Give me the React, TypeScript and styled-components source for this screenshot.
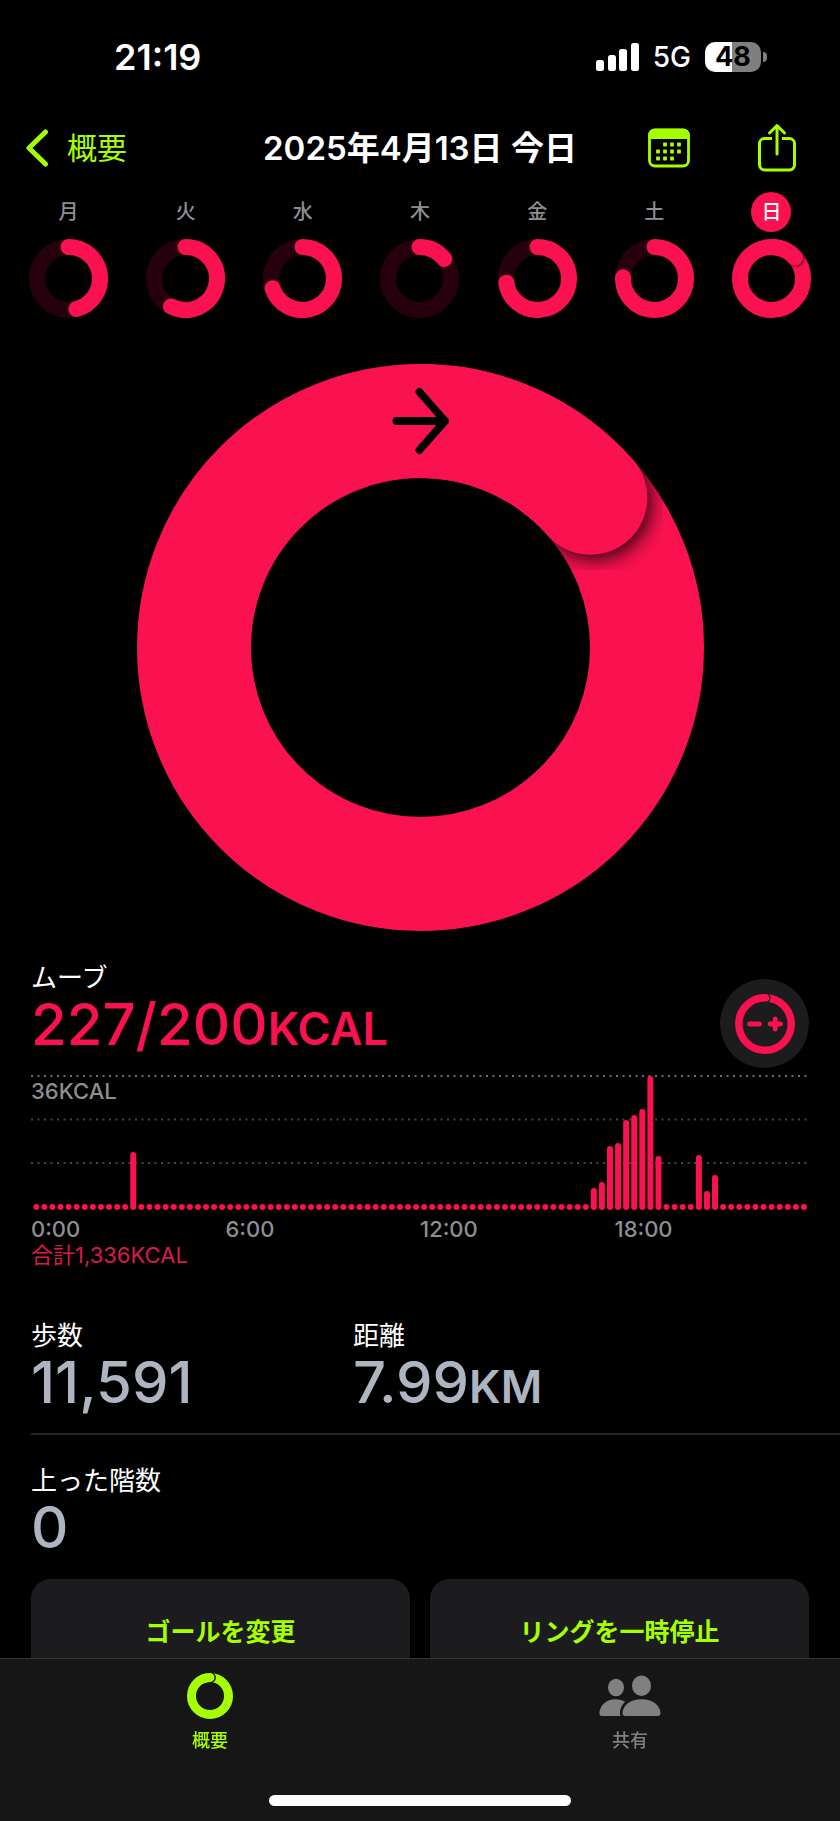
import React from 'react';
import styled, { createGlobalStyle } from 'styled-components';

const MOVE = '#fa114f';
const LIME = '#a6ff00';
const GRAY = '#8e8e93';

const GlobalStyle = createGlobalStyle`
  *, *::before, *::after { box-sizing: border-box; }
  html, body { margin: 0; padding: 0; background: #000; }
  body {
    color: #fff;
    font-family: Inter, "Noto Sans CJK JP", sans-serif;
    -webkit-font-smoothing: antialiased;
  }
  button { font: inherit; color: inherit; background: none; border: 0; padding: 0; cursor: pointer; }
  a { color: inherit; text-decoration: none; }
  h1, h2, p, dl, dt, dd { margin: 0; font-weight: inherit; font-size: inherit; }
  svg { display: block; }
`;

const Page = styled.div`
  min-height: 100vh;
  padding-bottom: 130px;
`;

const StatusBar = styled.div`
  display: flex;
  justify-content: space-between;
  align-items: center;
  height: 114px;
  padding: 0 73px 0 114px;
`;

const Clock = styled.time`
  font-size: 36px;
  font-weight: 600;
  line-height: 40px;
`;

const StatusIcons = styled.div`
  display: flex;
  align-items: center;
  gap: 14px;
`;

const Network = styled.span`
  font-size: 28px;
  font-weight: 500;
  line-height: 32px;
`;

const Battery = styled.div`
  display: flex;
  align-items: center;
  gap: 2px;
`;

const BatteryBody = styled.div<{ $level: number }>`
  width: 56px;
  height: 30px;
  border-radius: 10px;
  background: linear-gradient(to right, #fff ${p => p.$level}%, #7f7f7f ${p => p.$level}%);
  color: #000;
  font-size: 27px;
  font-weight: 700;
  line-height: 30px;
  text-align: center;
`;

const BatteryTip = styled.div`
  width: 4px;
  height: 10px;
  border-radius: 0 5px 5px 0;
  background: #7f7f7f;
`;

const NavBar = styled.header`
  display: grid;
  grid-template-columns: 1fr auto 1fr;
  align-items: center;
  height: 68px;
  padding: 0 26px;
`;

const BackLink = styled.a`
  display: flex;
  align-items: center;
  gap: 18px;
  color: ${LIME};
  font-size: 30px;
  line-height: 40px;
`;

const Title = styled.h1`
  font-size: 33px;
  font-weight: 600;
  line-height: 40px;
  white-space: nowrap;
`;

const NavActions = styled.div`
  display: flex;
  align-items: center;
  justify-content: flex-end;
  gap: 68px;
  padding-right: 18px;
`;

const IconButton = styled.button`
  color: ${LIME};
`;

const Week = styled.div`
  display: grid;
  grid-template-columns: repeat(7, 1fr);
  padding: 10px 10px 0;
`;

const Day = styled.button`
  display: flex;
  flex-direction: column;
  align-items: center;
  gap: 7px;
`;

const DayLabel = styled.span<{ $today?: boolean }>`
  width: 40px;
  height: 40px;
  border-radius: 50%;
  background: ${p => (p.$today ? MOVE : 'transparent')};
  color: ${p => (p.$today ? '#fff' : GRAY)};
  font-size: 20px;
  font-weight: 500;
  line-height: 40px;
`;

const Hero = styled.div`
  display: flex;
  justify-content: center;
  padding-top: 46px;

  svg { width: 67.5%; height: auto; }
`;

const MoveSection = styled.section`
  padding: 31px 31px 0;
`;

const MoveHeader = styled.div`
  display: flex;
  justify-content: space-between;
  align-items: flex-start;
`;

const Label = styled.div`
  font-size: 26px;
  line-height: 32px;
`;

const Value = styled.div<{ $move?: boolean }>`
  color: ${p => (p.$move ? MOVE : '#aeb4c0')};
  font-size: 58px;
  font-weight: 500;
  line-height: 60px;
  white-space: nowrap;

  small { font-size: 45px; font-weight: 600; line-height: 45px; }
`;

const AdjustButton = styled.button`
  display: grid;
  place-items: center;
  width: 89px;
  height: 89px;
  margin-top: 17px;
  border-radius: 50%;
  background: #1c1c1e;
  color: ${MOVE};
`;

const Chart = styled.div`
  position: relative;
  margin-top: 7px;

  svg { width: 100%; height: auto; }
`;

const ChartMax = styled.span`
  position: absolute;
  top: 3px;
  left: 0;
  color: ${GRAY};
  font-size: 22px;
  font-weight: 500;
  line-height: 26px;
`;

const Axis = styled.div`
  display: grid;
  grid-template-columns: repeat(4, 1fr);
  padding-top: 5px;
  color: ${GRAY};
  font-size: 22px;
  font-weight: 500;
  line-height: 26px;
`;

const Total = styled.p`
  color: #d91b4c;
  font-size: 22px;
  line-height: 26px;
`;

const Stats = styled.dl`
  margin-left: 31px;
`;

const StatRow = styled.div<{ $divided?: boolean }>`
  display: grid;
  grid-template-columns: minmax(0, 322px) 1fr;
  padding: ${p => (p.$divided ? '52px 0 21px' : '30px 0 0')};
  border-bottom: ${p => (p.$divided ? '2px solid #252527' : '0')};
`;

const Actions = styled.div`
  display: grid;
  grid-template-columns: 1fr 1fr;
  gap: 20px;
  padding: 22px 31px 0;
`;

const ActionButton = styled.button`
  height: 102px;
  border-radius: 20px;
  background: #1c1c1e;
  color: ${LIME};
  font-size: 25px;
  font-weight: 600;
`;

const TabBar = styled.nav`
  position: fixed;
  right: 0;
  bottom: 0;
  left: 0;
  border-top: 1px solid #343436;
  background: rgba(23, 23, 23, 0.94);
  backdrop-filter: blur(24px);
`;

const Tabs = styled.div`
  display: grid;
  grid-template-columns: 1fr 1fr;
`;

const Tab = styled.a<{ $active?: boolean }>`
  display: flex;
  flex-direction: column;
  align-items: center;
  gap: 9px;
  padding-top: 13px;
  color: ${p => (p.$active ? LIME : '#808080')};
  font-size: 18px;
  font-weight: 500;
  line-height: 24px;
`;

const HomeIndicator = styled.div`
  width: 36%;
  height: 11px;
  margin: 42px auto 15px;
  border-radius: 6px;
  background: #fff;
`;

interface RingProps {
  id: string;
  size: number;
  stroke: number;
  progress: number;
  arrow?: boolean;
}

function Ring({ id, size, stroke, progress, arrow }: RingProps) {
  const c = size / 2;
  const r = (size - stroke) / 2;
  const turn = (progress % 1) * Math.PI * 2;
  const ex = c + r * Math.sin(turn);
  const ey = c - r * Math.cos(turn);
  const full = progress > 1;
  const large = progress % 1 > 0.5 ? 1 : 0;
  const lead = stroke * 0.05;
  return (
    <svg width={size} height={size} viewBox={`0 0 ${size} ${size}`} role="img" aria-label={`${Math.round(progress * 100)}%`}>
      <circle cx={c} cy={c} r={r} fill="none" stroke={full ? MOVE : '#27000d'} strokeWidth={stroke} />
      {full && (
        <>
          <defs>
            <mask id={`${id}-mask`}>
              <circle cx={c} cy={c} r={r} fill="none" stroke="#fff" strokeWidth={stroke} />
            </mask>
            <filter id={`${id}-blur`} x="-60%" y="-60%" width="220%" height="220%">
              <feGaussianBlur stdDeviation={stroke * 0.085} />
            </filter>
          </defs>
          <g mask={`url(#${id}-mask)`}>
            <circle
              cx={ex + lead * Math.cos(turn)}
              cy={ey + lead * Math.sin(turn)}
              r={stroke / 2}
              fill="#000"
              opacity={0.85}
              filter={`url(#${id}-blur)`}
            />
          </g>
        </>
      )}
      <path
        d={`M${c} ${c - r}A${r} ${r} 0 ${large} 1 ${ex} ${ey}`}
        fill="none"
        stroke={MOVE}
        strokeWidth={stroke}
        strokeLinecap="round"
      />
      {arrow && (
        <path
          d="M259.500 57H308M282.500 28L308 57L282.500 86"
          fill="none"
          stroke="#000"
          strokeWidth="7.800"
          strokeLinecap="round"
          strokeLinejoin="round"
        />
      )}
    </svg>
  );
}

const week = [
  { label: '月', progress: 0.46 },
  { label: '火', progress: 0.576 },
  { label: '水', progress: 0.7 },
  { label: '木', progress: 0.144 },
  { label: '金', progress: 0.729 },
  { label: '土', progress: 0.756 },
  { label: '日', progress: 1.135, today: true },
];

/* Bar heights per quarter hour; every other slot is idle. */
const activity: Record<number, number> = {
  12: 58, 69: 22, 70: 28, 71: 64, 72: 67, 73: 90, 74: 95, 75: 101, 76: 134, 77: 54, 82: 55, 83: 19, 84: 35,
};

function MoveChart() {
  return (
    <svg viewBox="0 0 778 136" aria-hidden="true">
      {[1, 44.5, 88].map((y, i) => (
        <line key={y} x1="0" x2="778" y1={y} y2={y} stroke={i ? '#464648' : '#6c6c70'} strokeWidth="2" strokeDasharray="2 4.5" />
      ))}
      {Array.from({ length: 96 }, (_, i) => {
        const h = activity[i] ?? 6;
        return <rect key={i} x={2.3 + i * 8.08} y={135 - h} width="6" height={h} rx="3" fill={MOVE} />;
      })}
    </svg>
  );
}

function SignalIcon() {
  return (
    <svg width="43" height="28" viewBox="0 0 43 28" fill="#fff" aria-hidden="true">
      <rect x="0" y="17" width="8" height="11" rx="2.500" />
      <rect x="12" y="12" width="8" height="16" rx="2.500" />
      <rect x="23" y="6" width="8" height="22" rx="2.500" />
      <rect x="35" y="0" width="8" height="28" rx="2.500" />
    </svg>
  );
}

function CalendarIcon() {
  const dots = [[17, 16], [24, 16], [31, 16], [10, 23], [17, 23], [24, 23], [31, 23], [10, 30], [17, 30], [24, 30]];
  return (
    <svg width="42" height="40" viewBox="0 0 42 40" aria-hidden="true">
      <rect x="1.500" y="2" width="39" height="36" rx="5.500" fill="none" stroke={LIME} strokeWidth="2.800" />
      <path d="M0.500 11V7a6 6 0 0 1 6-6.300h29a6 6 0 0 1 6 6.300v4z" fill={LIME} />
      {dots.map(([x, y]) => (
        <rect key={`${x}-${y}`} x={x - 1.9} y={y - 1.4} width="3.800" height="3.800" rx="0.600" fill={LIME} />
      ))}
    </svg>
  );
}

function ShareIcon() {
  return (
    <svg width="38" height="50" viewBox="0 0 38 50" fill="none" stroke={LIME} strokeWidth="3" strokeLinecap="round" strokeLinejoin="round" aria-hidden="true">
      <path d="M14 15.500H6.500a5 5 0 0 0-5 5v21.500a5 5 0 0 0 5 5h25a5 5 0 0 0 5-5v-21.500a5 5 0 0 0-5-5H24" strokeLinecap="butt" />
      <path d="M19 31V3M11.500 10L19 2.500L26.500 10" />
    </svg>
  );
}

function AdjustIcon() {
  return (
    <svg width="60" height="60" viewBox="0 0 60 60" fill="none" stroke="currentColor" strokeLinecap="round" aria-hidden="true">
      <circle cx="30" cy="30" r="26.200" strokeWidth="7.400" />
      <circle cx="30.500" cy="3.800" r="5.200" fill="#1c1c1e" stroke="none" />
      <path d="M22 5A26.200 26.200 0 0 1 30.500 3.800" strokeWidth="7.400" />
      <path d="M14.500 30H24.500M35 30H45.500M40.200 24.800V35.200" strokeWidth="4.800" />
    </svg>
  );
}

function SummaryIcon() {
  return (
    <svg width="48" height="48" viewBox="0 0 48 48" fill="none" stroke="currentColor" strokeLinecap="round" aria-hidden="true">
      <circle cx="24" cy="24" r="18.500" strokeWidth="9" />
      <circle cx="24.500" cy="5.500" r="5.400" fill="#171717" stroke="none" />
      <path d="M17 6.900A18.500 18.500 0 0 1 24 5.500" strokeWidth="9" />
    </svg>
  );
}

function SharingIcon() {
  return (
    <svg width="62" height="48" viewBox="0 0 62 48" fill="currentColor" aria-hidden="true">
      <ellipse cx="17" cy="15.500" rx="8" ry="8.800" />
      <ellipse cx="42.500" cy="13.800" rx="9.500" ry="10.200" />
      <path d="M3 44C1.200 44 0.300 42.800 0.400 41C0.800 33.500 7.500 27.300 16.500 27.300c3.800 0 7 .9 9.600 2.400C22.900 32.700 21 36.500 20.900 41c0 1.100.2 2.100.7 3z" />
      <path d="M26.500 44c-2 0-3-1.100-3-3C23.700 33.500 31.500 27.300 42.500 27.300S61.200 33.500 61.500 41c0 1.900-1 3-3 3z" />
    </svg>
  );
}

export default function App() {
  return (
    <>
      <GlobalStyle />
      <Page>
        <StatusBar>
          <Clock>21:19</Clock>
          <StatusIcons>
            <SignalIcon />
            <Network>5G</Network>
            <Battery>
              <BatteryBody $level={49}>48</BatteryBody>
              <BatteryTip />
            </Battery>
          </StatusIcons>
        </StatusBar>

        <NavBar>
          <BackLink href="#summary">
            <svg width="23" height="38" viewBox="0 0 23 38" fill="none" stroke={LIME} strokeWidth="5" strokeLinecap="round" strokeLinejoin="round" aria-hidden="true">
              <path d="M19.500 3L3 19L19.500 35" />
            </svg>
            概要
          </BackLink>
          <Title>2025年4月13日 今日</Title>
          <NavActions>
            <IconButton aria-label="カレンダー"><CalendarIcon /></IconButton>
            <IconButton aria-label="共有"><ShareIcon /></IconButton>
          </NavActions>
        </NavBar>

        <main>
          <Week>
            {week.map((d, i) => (
              <Day key={d.label}>
                <DayLabel $today={d.today}>{d.label}</DayLabel>
                <Ring id={`day-${i}`} size={79} stroke={16} progress={d.progress} />
              </Day>
            ))}
          </Week>

          <Hero>
            <Ring id="hero" size={567} stroke={114} progress={1.135} arrow />
          </Hero>

          <MoveSection>
            <MoveHeader>
              <div>
                <Label as="h2">ムーブ</Label>
                <Value $move>227/200<small>KCAL</small></Value>
              </div>
              <AdjustButton aria-label="ゴールを調整"><AdjustIcon /></AdjustButton>
            </MoveHeader>
            <Chart>
              <MoveChart />
              <ChartMax>36KCAL</ChartMax>
            </Chart>
            <Axis>
              <span>0:00</span>
              <span>6:00</span>
              <span>12:00</span>
              <span>18:00</span>
            </Axis>
            <Total>合計1,336KCAL</Total>
          </MoveSection>

          <Stats>
            <StatRow $divided>
              <div>
                <Label as="dt">歩数</Label>
                <Value as="dd">11,591</Value>
              </div>
              <div>
                <Label as="dt">距離</Label>
                <Value as="dd">7.99<small>KM</small></Value>
              </div>
            </StatRow>
            <StatRow>
              <div>
                <Label as="dt">上った階数</Label>
                <Value as="dd">0</Value>
              </div>
            </StatRow>
          </Stats>

          <Actions>
            <ActionButton>ゴールを変更</ActionButton>
            <ActionButton>リングを一時停止</ActionButton>
          </Actions>
        </main>
      </Page>

      <TabBar>
        <Tabs>
          <Tab href="#summary" $active aria-current="page">
            <SummaryIcon />
            概要
          </Tab>
          <Tab href="#sharing">
            <SharingIcon />
            共有
          </Tab>
        </Tabs>
        <HomeIndicator />
      </TabBar>
    </>
  );
}
